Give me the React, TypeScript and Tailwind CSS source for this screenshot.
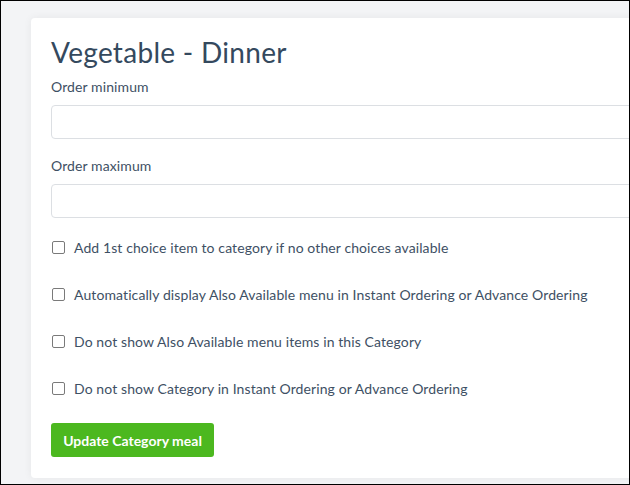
import React from "react";

const options = [
  "Add 1st choice item to category if no other choices available",
  "Automatically display Also Available menu in Instant Ordering or Advance Ordering",
  "Do not show Also Available menu items in this Category",
  "Do not show Category in Instant Ordering or Advance Ordering",
];

export default function App() {
  return (
    <div
      className="w-[630px] h-[485px] border border-black bg-[#f3f4f6] overflow-hidden"
      style={{ fontFamily: "Lato, 'Liberation Sans', sans-serif" }}
    >
      <div className="ml-[30px] mt-[17px] w-[640px] h-[460px] bg-white rounded-[4px] shadow-[0_0_8px_rgba(0,0,0,0.06)] pl-[20px] pt-[17px]">
        <h1 className="text-[28px] leading-[34px] text-[#34495e] tracking-[0.3px]">Vegetable - Dinner</h1>
        <label className="block mt-[9px] text-[14px] leading-[18px] text-[#3e5064] tracking-[0.1px]">Order minimum</label>
        <div className="mt-[9px] h-[34px] border border-[#dcdfe3] rounded-[4px]" />
        <label className="block mt-[18px] text-[14px] leading-[18px] text-[#3e5064] tracking-[0.1px]">Order maximum</label>
        <div className="mt-[9px] h-[34px] border border-[#dcdfe3] rounded-[4px]" />
        <div className="mt-[6px] flex flex-col">
          {options.map((o) => (
            <label key={o} className="flex items-center h-[47px] text-[14px] text-[#3e5064] tracking-[0.1px]">
              <span className="ml-[1px] w-[13px] h-[13px] border border-[#7a7a7a] rounded-[2px] bg-white" />
              <span className="ml-[9px]">{o}</span>
            </label>
          ))}
        </div>
        <button className="mt-[11px] h-[34px] w-[163px] bg-[#4cb81f] rounded-[3px] text-white font-bold text-[14px]">
          Update Category meal
        </button>
      </div>
    </div>
  );
}
